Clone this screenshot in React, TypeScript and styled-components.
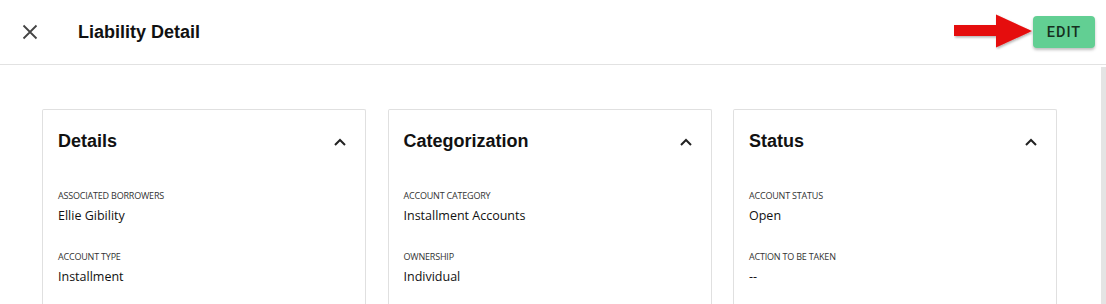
import React from 'react'
import styled, { createGlobalStyle } from 'styled-components'

const GlobalStyle = createGlobalStyle`
  html, body {
    margin: 0;
    padding: 0;
    background: #ffffff;
    overflow: hidden;
  }
  body {
    font-family: 'Liberation Sans', Arial, sans-serif;
    color: #111;
  }
`

interface IField {
  label: string
  value: string
}

interface ISection {
  title: string
  fields: IField[]
}

const sections: ISection[] = [
  {
    title: 'Details',
    fields: [
      { label: 'ASSOCIATED BORROWERS', value: 'Ellie Gibility' },
      { label: 'ACCOUNT TYPE', value: 'Installment' },
    ],
  },
  {
    title: 'Categorization',
    fields: [
      { label: 'ACCOUNT CATEGORY', value: 'Installment Accounts' },
      { label: 'OWNERSHIP', value: 'Individual' },
    ],
  },
  {
    title: 'Status',
    fields: [
      { label: 'ACCOUNT STATUS', value: 'Open' },
      { label: 'ACTION TO BE TAKEN', value: '--' },
    ],
  },
]

const CloseGlyph = () => (
  <svg width="24" height="24" viewBox="0 0 24 24">
    <path
      d="M5.5 5.5 L18.5 18.5 M18.5 5.5 L5.5 18.5"
      stroke="#444"
      strokeWidth="1.8"
      fill="none"
    />
  </svg>
)

const ChevronUp = () => (
  <svg width="14" height="10" viewBox="0 0 14 10">
    <path d="M2 8 L7 3 L12 8" stroke="#222" strokeWidth="2" fill="none" />
  </svg>
)

// red pointer drawn in the screenshot, pointing at the edit button
const Arrow = () => (
  <svg width="80" height="36" viewBox="0 0 80 36">
    <defs>
      <filter id="arrowShadow" x="-10%" y="-20%" width="130%" height="150%">
        <feDropShadow dx="1" dy="1.5" stdDeviation="1" floodColor="#000" floodOpacity="0.3" />
      </filter>
    </defs>
    <polygon
      points="0,11 42,11 42,0.5 78,17 42,33.5 42,22 0,22"
      fill="#e50b0b"
      filter="url(#arrowShadow)"
    />
  </svg>
)

const Section: React.FC<ISection> = ({ title, fields }) => (
  <Card>
    <CardHead>
      <CardTitle>{title}</CardTitle>
      <ChevronUp />
    </CardHead>
    {fields.map((f) => (
      <Field key={f.label}>
        <Label>{f.label}</Label>
        <Value>{f.value}</Value>
      </Field>
    ))}
  </Card>
)

const App: React.FC = () => {
  return (
    <>
      <GlobalStyle />
      <Page>
        <Header>
          <IconButton>
            <CloseGlyph />
          </IconButton>
          <Title>Liability Detail</Title>
          <Actions>
            <Arrow />
            <EditButton>EDIT</EditButton>
          </Actions>
        </Header>
        <Body>
          <Cards>
            {sections.map((s) => (
              <Section key={s.title} {...s} />
            ))}
          </Cards>
          <ScrollTrack />
        </Body>
      </Page>
    </>
  )
}

export default App

const Page = styled.div`
  width: 1106px;
  height: 304px;
  display: flex;
  flex-direction: column;
  overflow: hidden;
`

const Header = styled.header`
  height: 65px;
  box-sizing: border-box;
  border-bottom: 1px solid #e2e2e2;
  display: flex;
  align-items: center;
  padding: 0 11px 0 18px;
  flex-shrink: 0;
`

const IconButton = styled.button`
  width: 24px;
  height: 24px;
  padding: 0;
  margin: 0 36px 0 0;
  border: none;
  background: transparent;
  display: flex;
  align-items: center;
  justify-content: center;
`

const Title = styled.h1`
  margin: 0;
  font-size: 18px;
  font-weight: 700;
  color: #111;
  padding-top: 1px;
`

const Actions = styled.div`
  margin-left: auto;
  display: flex;
  align-items: center;
`

const EditButton = styled.button`
  width: 62px;
  height: 32px;
  margin-left: -1px;
  border: none;
  border-radius: 4px;
  background: #62cf93;
  color: #16301f;
  font-family: Roboto, 'Liberation Sans', sans-serif;
  font-size: 14.5px;
  font-weight: 500;
  letter-spacing: 1px;
  box-shadow: 0 2px 3px rgba(0, 0, 0, 0.25);
  padding: 0;
`

const Body = styled.main`
  flex: 1;
  display: flex;
  justify-content: space-between;
  padding: 44px 0 0 42px;
  min-height: 0;
`

const Cards = styled.div`
  display: grid;
  grid-template-columns: repeat(3, 324px);
  column-gap: 21.5px;
  align-items: start;
`

const ScrollTrack = styled.div`
  width: 5px;
  margin-top: -42px;
  background: #e4e4e4;
  align-self: stretch;
`

const Card = styled.section`
  border: 1px solid #e0e0e0;
  border-bottom: none;
  border-radius: 2px 2px 0 0;
  padding: 0 18px 40px 15px;
  height: 220px;
  box-sizing: border-box;
`

const CardHead = styled.div`
  height: 63px;
  display: flex;
  align-items: center;
  justify-content: space-between;
  margin-bottom: 17px;
`

const CardTitle = styled.h2`
  margin: 0;
  font-size: 18px;
  font-weight: 700;
  color: #111;
`

const Field = styled.div`
  display: flex;
  flex-direction: column;
  gap: 5px;
  margin-bottom: 27px;
`

const Label = styled.div`
  font-family: 'Open Sans', 'Noto Sans', sans-serif;
  font-size: 9px;
  letter-spacing: -0.2px;
  color: #333;
  line-height: 12px;
`

const Value = styled.div`
  font-family: 'Open Sans', 'Noto Sans', sans-serif;
  font-size: 12.5px;
  color: #111;
  line-height: 17px;
`
